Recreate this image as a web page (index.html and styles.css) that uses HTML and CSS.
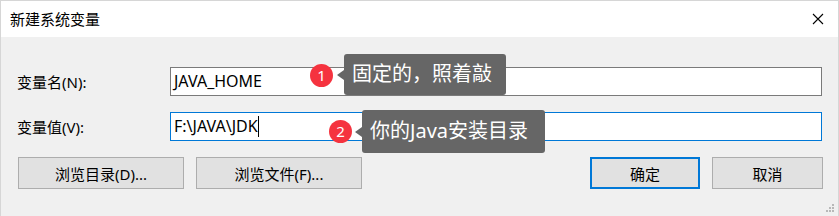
FILE: index.html
```html
<!DOCTYPE html>
<html lang="zh-CN">
<head>
    <meta charset="UTF-8">
    <meta name="viewport" content="width=device-width, initial-scale=1.0">
    <title>新建系统变量</title>
    <link rel="stylesheet" href="styles.css">
</head>
<body>
    <div class="window">
        <div class="titlebar">
            <span class="title">新建系统变量</span>
            <svg class="close" width="12" height="12" viewBox="0 0 12 12">
                <path d="M1 1 L11 11 M11 1 L1 11" stroke="#000" stroke-width="1.1" fill="none"/>
            </svg>
        </div>

        <div class="content">
            <div class="row">
                <label class="label">变量名(N):</label>
                <div class="input">JAVA_HOME</div>
            </div>
            <div class="row">
                <label class="label">变量值(V):</label>
                <div class="input focused">F:\JAVA\JDK<span class="caret"></span></div>
            </div>

            <div class="buttons">
                <button class="btn browse">浏览目录(D)...</button>
                <button class="btn browse">浏览文件(F)...</button>
                <div class="spacer"></div>
                <button class="btn ok">确定</button>
                <button class="btn cancel">取消</button>
            </div>
        </div>

        <!-- подсказки поверх формы -->
        <span class="badge badge-1">1</span>
        <div class="tip tip-1">固定的，照着敲</div>
        <span class="badge badge-2">2</span>
        <div class="tip tip-2">你的Java安装目录</div>

        <div class="grip">
            <i></i><i></i><i></i><i></i><i></i><i></i>
        </div>
    </div>
</body>
</html>
```

FILE: styles.css
```css
body {
    margin: 0;
    background: #f0f0f0;
    font-family: "Noto Sans", "Noto Sans CJK SC", sans-serif;
    font-size: 15px;
    color: #000;
}
.window {
    position: relative;
    width: 837px;
    height: 215px;
    border: 1px solid #d6d6d6;
    border-bottom: none;
    background: #f0f0f0;
    overflow: hidden;
}
.titlebar {
    height: 36px;
    background: #fff;
    display: flex;
    align-items: center;
    justify-content: space-between;
    padding: 0 14px 0 9px;
}
.title {
    font-size: 15px;
    line-height: 20px;
    margin-top: -1px;
}
.close {
    display: block;
}
.content {
    padding: 30px 15px 0 16px;
}
.row {
    display: flex;
    align-items: center;
    height: 29px;
    margin-bottom: 16px;
}
.label {
    width: 153px;
    line-height: 20px;
}
.input {
    flex: 0 0 auto;
    width: 643px;
    height: 27px;
    line-height: 26px;
    font-size: 16px;
    border: 1px solid #7a7a7a;
    background: #fff;
    padding: 0 4px 0 3px;
}
.input.focused {
    border-color: #0078d7;
}
.caret {
    display: inline-block;
    width: 1px;
    height: 21px;
    background: #000;
    vertical-align: middle;
    margin-top: -2px;
}
.buttons {
    display: flex;
    margin-top: 6px;
    gap: 12px;
    padding-left: 1px;
}
.spacer {
    flex: 1;
}
.btn {
    font-family: inherit;
    font-size: 15px;
    height: 32px;
    background: #e1e1e1;
    border: 1px solid #adadad;
    padding: 0;
    color: #000;
}
.browse {
    width: 166px;
}
.ok {
    width: 110px;
    border: 2px solid #0078d7;
}
.cancel {
    width: 111px;
}
.badge {
    position: absolute;
    width: 23px;
    height: 23px;
    border-radius: 50%;
    background: #f5333f;
    color: #fff;
    font-size: 15px;
    line-height: 23px;
    text-align: center;
}
.badge-1 {
    left: 309px;
    top: 63px;
}
.badge-2 {
    left: 328px;
    top: 119px;
}
.tip {
    position: absolute;
    background: #666;
    color: #fff;
    font-size: 20px;
    border-radius: 3px;
    padding-left: 8px;
    box-sizing: border-box;
}
.tip::before {
    content: "";
    position: absolute;
    left: -7px;
    top: 50%;
    margin-top: -5px;
    border-right: 7px solid #666;
    border-top: 5px solid transparent;
    border-bottom: 5px solid transparent;
}
.tip-1 {
    left: 343px;
    top: 53px;
    width: 162px;
    height: 41px;
    line-height: 40px;
}
.tip-2 {
    left: 361px;
    top: 109px;
    width: 183px;
    height: 43px;
    line-height: 42px;
}
.grip {
    position: absolute;
    right: 4px;
    bottom: 3px;
    width: 9px;
    height: 9px;
}
.grip i {
    position: absolute;
    width: 2px;
    height: 2px;
    background: #b8b8b8;
}
.grip i:nth-child(1) { right: 0; top: 0; }
.grip i:nth-child(2) { right: 0; top: 3px; }
.grip i:nth-child(3) { right: 3px; top: 3px; }
.grip i:nth-child(4) { right: 0; top: 6px; }
.grip i:nth-child(5) { right: 3px; top: 6px; }
.grip i:nth-child(6) { right: 6px; top: 6px; }
```
